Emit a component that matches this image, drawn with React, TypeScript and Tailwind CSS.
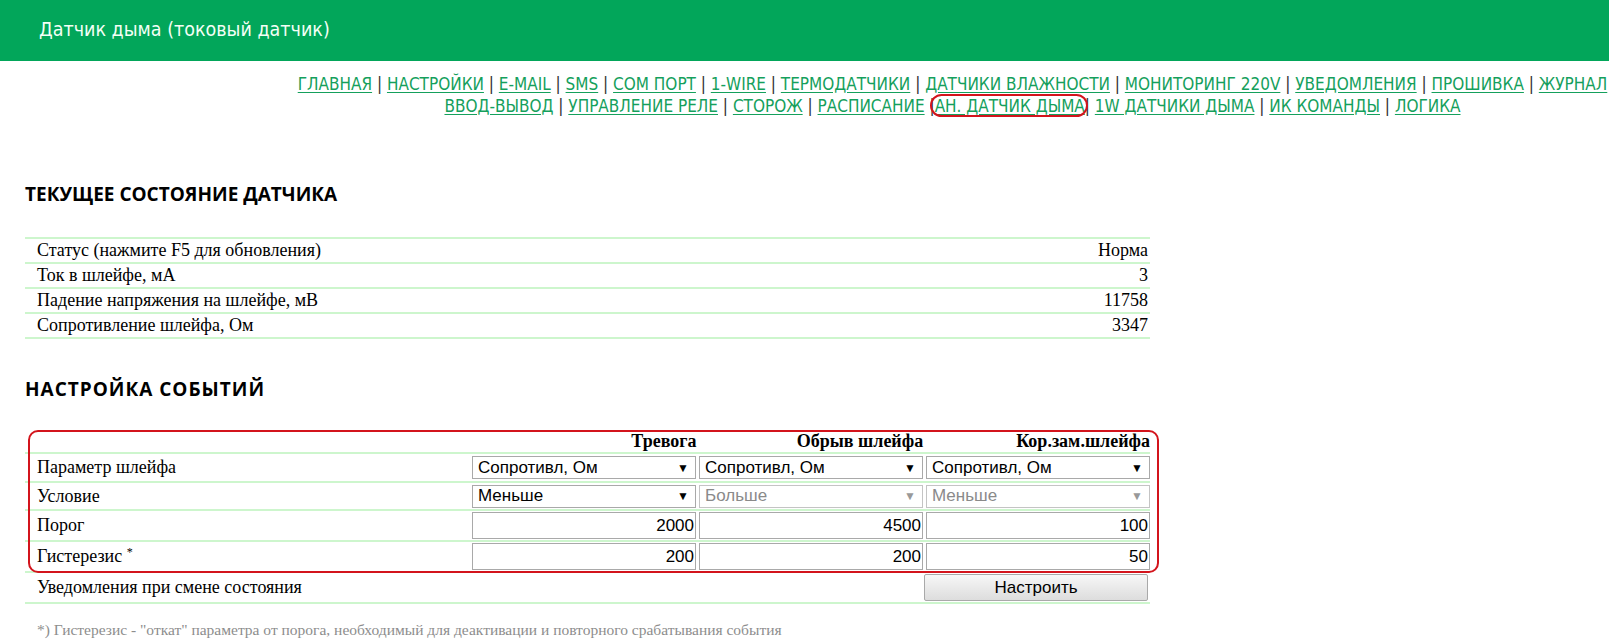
import React from 'react'

const navLine1 = [
  'ГЛАВНАЯ',
  'НАСТРОЙКИ',
  'E-MAIL',
  'SMS',
  'COM ПОРТ',
  '1-WIRE',
  'ТЕРМОДАТЧИКИ',
  'ДАТЧИКИ ВЛАЖНОСТИ',
  'МОНИТОРИНГ 220V',
  'УВЕДОМЛЕНИЯ',
  'ПРОШИВКА',
  'ЖУРНАЛ',
]

const statusRows = [
  ['Статус (нажмите F5 для обновления)', 'Норма'],
  ['Ток в шлейфе, мА', '3'],
  ['Падение напряжения на шлейфе, мВ', '11758'],
  ['Сопротивление шлейфа, Ом', '3347'],
]

function NavLink({ children }: { children: React.ReactNode }) {
  return <a className="text-[#15a05c] underline underline-offset-2">{children}</a>
}

function Sep() {
  return <span className="text-[#333]"> | </span>
}

function FakeSelect({ value, disabled }: { value: string; disabled?: boolean }) {
  return (
    <div
      className={
        'flex h-[23px] w-[224px] items-center justify-between border bg-white pl-[5px] pr-[6px] text-[17px] ' +
        (disabled ? 'border-[#c4c4c4] text-[#8a8a8a]' : 'border-[#a9a9a9] text-black')
      }
    >
      <span>{value}</span>
      <span className={'text-[12px] ' + (disabled ? 'text-[#999]' : 'text-black')}>▼</span>
    </div>
  )
}

function FakeInput({ value }: { value: string }) {
  return (
    <div className="flex h-[27px] w-[224px] items-center justify-end border border-[#a9a9a9] bg-white pr-[1px] text-[17px]">
      {value}
    </div>
  )
}

export default function App() {
  const sans = { fontFamily: '"Liberation Sans", Arial, sans-serif' }
  const heading = { fontFamily: '"Open Sans", sans-serif' }

  return (
    <div className="min-h-[642px] w-[1609px] bg-white" style={{ fontFamily: '"Liberation Serif", "Times New Roman", serif' }}>
      <div className="flex h-[61px] items-center bg-[#02a65a] pl-[39px] pb-[2px]">
        <span
          className="text-[19.5px] text-[#f4fff6]"
          style={{ fontFamily: '"DejaVu Sans Condensed", "DejaVu Sans", sans-serif' }}
        >
          Датчик дыма (токовый датчик)
        </span>
      </div>

      <div
        className="ml-[296px] pt-[12px] text-center text-[17px] leading-[22px]"
        style={{ fontFamily: '"DejaVu Sans Condensed", "DejaVu Sans", sans-serif' }}
      >
        <div className="whitespace-nowrap">
          {navLine1.map((n, i) => (
            <React.Fragment key={n}>
              {i > 0 && <Sep />}
              <NavLink>{n}</NavLink>
            </React.Fragment>
          ))}
        </div>
        <div className="whitespace-nowrap">
          <NavLink>ВВОД-ВЫВОД</NavLink>
          <Sep />
          <NavLink>УПРАВЛЕНИЕ РЕЛЕ</NavLink>
          <Sep />
          <NavLink>СТОРОЖ</NavLink>
          <Sep />
          <NavLink>РАСПИСАНИЕ</NavLink>
          <span className="text-[#333]"> |</span>
          <span className="relative">
            <span className="absolute -left-[5px] -right-[3px] -top-[2px] -bottom-[1px] rounded-full border-2 border-[#d3141c]" />
            <NavLink>АН. ДАТЧИК ДЫМА</NavLink>
          </span>
          <span className="text-[#333]">| </span>
          <NavLink>1W ДАТЧИКИ ДЫМА</NavLink>
          <Sep />
          <NavLink>ИК КОМАНДЫ</NavLink>
          <Sep />
          <NavLink>ЛОГИКА</NavLink>
        </div>
      </div>

      <div className="pl-[25px]">
        <h2 className="mt-[66px] text-[19px] font-bold leading-[22px] text-black" style={heading}>
          ТЕКУЩЕЕ СОСТОЯНИЕ ДАТЧИКА
        </h2>

        <div className="mt-[32px] w-[1125px] border-t-2 border-[#cdf6cd] text-[18px]">
          {statusRows.map(([label, value]) => (
            <div key={label} className="flex h-[25px] items-center justify-between border-b-2 border-[#cdf6cd] pl-[12px] pr-[2px]">
              <span>{label}</span>
              <span>{value}</span>
            </div>
          ))}
        </div>

        <h2 className="mt-[39px] text-[19px] font-bold leading-[22px] tracking-[1px] text-black" style={heading}>
          НАСТРОЙКА СОБЫТИЙ
        </h2>

        <div className="relative mt-[30px] w-[1125px] text-[18px]">
          <div className="pointer-events-none absolute left-[3px] top-0 h-[143px] w-[1131px] rounded-[10px] border-2 border-[#d3141c]" />

          <div className="flex h-[24px] items-end gap-[3px] border-b-2 border-[#cdf6cd] pb-[1px] font-bold leading-[20px]">
            <div className="w-[445px]" />
            <div className="w-[224px] text-right">Тревога</div>
            <div className="w-[224px] text-right">Обрыв шлейфа</div>
            <div className="w-[224px] text-right">Кор.зам.шлейфа</div>
          </div>

          <div className="flex h-[29px] items-center gap-[3px] border-b-2 border-[#cdf6cd]">
            <div className="w-[445px] pl-[12px]">Параметр шлейфа</div>
            <div style={sans} className="flex gap-[3px]">
              <FakeSelect value="Сопротивл, Ом" />
              <FakeSelect value="Сопротивл, Ом" />
              <FakeSelect value="Сопротивл, Ом" />
            </div>
          </div>

          <div className="flex h-[28px] items-center gap-[3px] border-b-2 border-[#cdf6cd]">
            <div className="w-[445px] pl-[12px]">Условие</div>
            <div style={sans} className="flex gap-[3px]">
              <FakeSelect value="Меньше" />
              <FakeSelect value="Больше" disabled />
              <FakeSelect value="Меньше" disabled />
            </div>
          </div>

          <div className="flex h-[31px] items-center gap-[3px] border-b-2 border-[#cdf6cd]">
            <div className="w-[445px] pl-[12px]">Порог</div>
            <div style={sans} className="flex gap-[3px]">
              <FakeInput value="2000" />
              <FakeInput value="4500" />
              <FakeInput value="100" />
            </div>
          </div>

          <div className="flex h-[31px] items-center gap-[3px] border-b-2 border-[#cdf6cd]">
            <div className="w-[445px] pl-[12px]">
              Гистерезис <sup className="text-[12px]">*</sup>
            </div>
            <div style={sans} className="flex gap-[3px]">
              <FakeInput value="200" />
              <FakeInput value="200" />
              <FakeInput value="50" />
            </div>
          </div>

          <div className="flex h-[31px] items-center justify-between border-b-2 border-[#cdf6cd] pr-[2px]">
            <div className="pl-[12px]">Уведомления при смене состояния</div>
            <button
              style={sans}
              className="h-[27px] w-[224px] rounded-[2px] border border-[#a9a9a9] bg-gradient-to-b from-[#f7f7f7] to-[#dddddd] text-[17px] text-black"
            >
              Настроить
            </button>
          </div>
        </div>

        <p className="mt-[14px] pl-[12px] text-[15.5px] leading-[23px] text-[#8d8d8d]">
          *) Гистерезис - "откат" параметра от порога, необходимый для деактивации и повторного срабатывания события
        </p>
      </div>
    </div>
  )
}
